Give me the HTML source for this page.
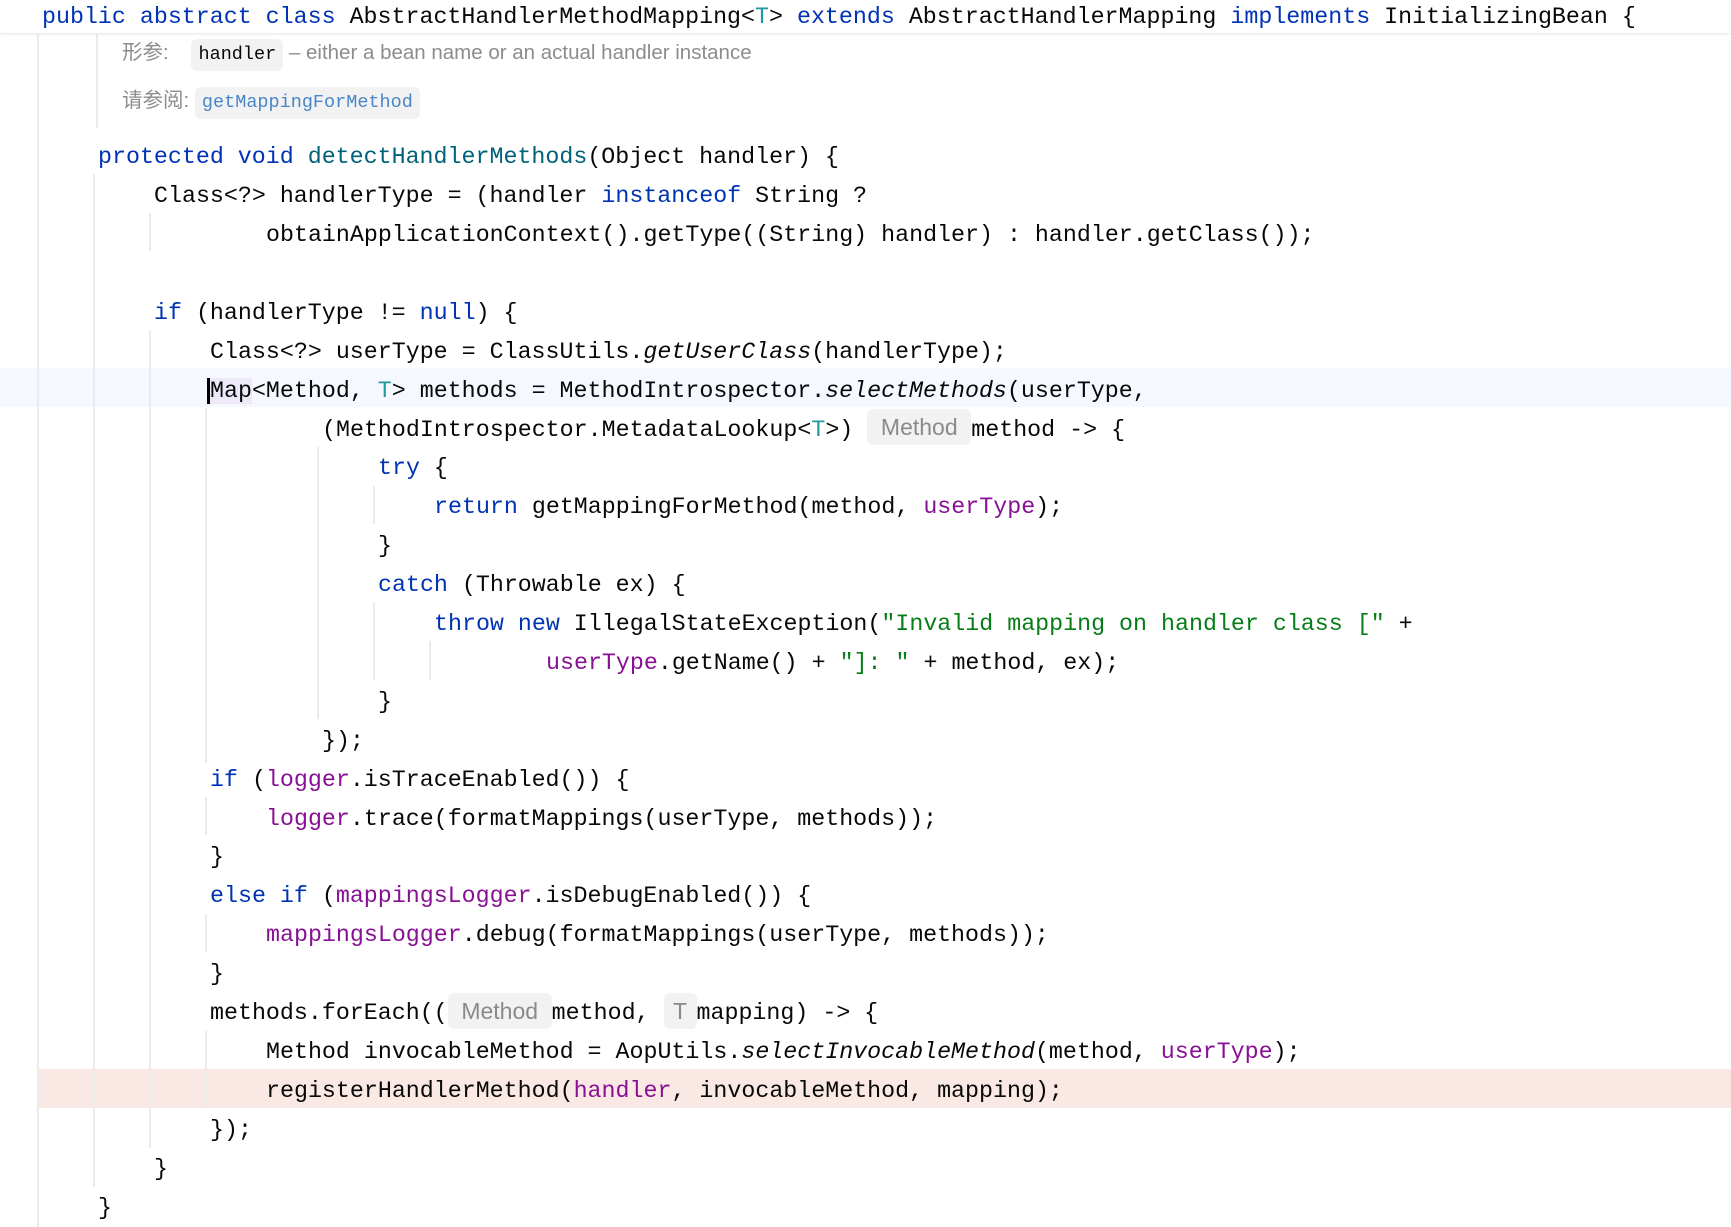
<!DOCTYPE html>
<html><head><meta charset="utf-8"><style>
*{margin:0;padding:0}
body{width:1731px;height:1227px;background:#fff;position:relative;overflow:hidden;font-family:"Liberation Mono",monospace;font-size:23.3px;color:#080808}
.l{position:absolute;left:0;height:38.9px;line-height:38.9px;white-space:pre;margin-top:3px}
.k{color:#0033b3}.f{color:#871094}.s{color:#067d17}.t{color:#20999d}.d{color:#00627a}.i{font-style:italic}
.g{position:absolute;width:2px;background:#ebebeb}
.inl{display:inline-block;font-family:"Liberation Sans",sans-serif;font-size:23px;color:#8a8a8a;background:#f2f2f2;border-radius:6px;text-align:center;line-height:36px;vertical-align:middle;margin-top:-4px}
.doc{position:absolute;font-family:"Liberation Sans","Noto Sans CJK SC",sans-serif;font-size:20.5px;color:#8c8c8c;white-space:pre}
.chip{display:inline-block;font-family:"Liberation Mono",monospace;font-size:18.5px;background:#f2f2f2;border-radius:6px;padding:0 7px;line-height:32px}
</style></head><body>
<div style="position:absolute;left:0;top:368px;width:1731px;height:39px;background:#f5f8fe"></div>
<div style="position:absolute;left:38px;top:1069px;width:1693px;height:39px;background:#f9e8e4"></div>
<div class="g" style="left:37px;top:33px;height:1194px;background:#ececec"></div>
<div class="g" style="left:96px;top:33px;height:95px"></div>
<div class="g" style="left:93px;top:174px;height:1013px"></div>
<div class="g" style="left:149px;top:213px;height:38px"></div>
<div class="g" style="left:149px;top:330px;height:818px"></div>
<div class="g" style="left:205px;top:408px;height:355px"></div>
<div class="g" style="left:205px;top:797px;height:38px"></div>
<div class="g" style="left:205px;top:914px;height:38px"></div>
<div class="g" style="left:205px;top:1031px;height:77px"></div>
<div class="g" style="left:317px;top:447px;height:272px"></div>
<div class="g" style="left:373px;top:486px;height:38px"></div>
<div class="g" style="left:373px;top:602px;height:78px"></div>
<div class="g" style="left:429px;top:641px;height:39px"></div>
<div style="position:absolute;left:0;top:0;width:1731px;height:33px;background:#fff;border-bottom:1px solid #ececec;box-shadow:0 1px 3px rgba(0,0,0,0.05)"></div>
<div class="l" style="left:42px;top:-5px"><span class="k">public abstract class</span> AbstractHandlerMethodMapping&lt;<span class="t">T</span>&gt; <span class="k">extends</span> AbstractHandlerMapping <span class="k">implements</span> InitializingBean {</div>
<div class="doc" style="left:122px;top:35px">形参:    <span class="chip" style="color:#080808">handler</span> – either a bean name or an actual handler instance</div>
<div class="doc" style="left:122px;top:83px">请参阅: <span class="chip" style="color:#4a86c7">getMappingForMethod</span></div>
<div class="l" style="left:98px;top:135.2px"><span class="k">protected void</span> <span class="d">detectHandlerMethods</span>(Object handler) {</div>
<div class="l" style="left:154px;top:174.1px">Class&lt;?&gt; handlerType = (handler <span class="k">instanceof</span> String ?</div>
<div class="l" style="left:266px;top:213px">obtainApplicationContext().getType((String) handler) : handler.getClass());</div>
<div class="l" style="left:154px;top:290.8px"><span class="k">if</span> (handlerType != <span class="k">null</span>) {</div>
<div class="l" style="left:210px;top:329.7px">Class&lt;?&gt; userType = ClassUtils.<span class="i">getUserClass</span>(handlerType);</div>
<div class="l" style="left:210px;top:368.6px"><span style="background:#ede9f8;border-left:3px solid #000;margin-left:-3px">Map</span>&lt;Method, <span class="t">T</span>&gt; methods = MethodIntrospector.<span class="i">selectMethods</span>(userType,</div>
<div class="l" style="left:322px;top:407.5px">(MethodIntrospector.MetadataLookup&lt;<span class="t">T</span>&gt;) <span class="inl" style="width:104px">Method</span>method -&gt; {</div>
<div class="l" style="left:378px;top:446.4px"><span class="k">try</span> {</div>
<div class="l" style="left:434px;top:485.3px"><span class="k">return</span> getMappingForMethod(method, <span class="f">userType</span>);</div>
<div class="l" style="left:378px;top:524.2px">}</div>
<div class="l" style="left:378px;top:563.1px"><span class="k">catch</span> (Throwable ex) {</div>
<div class="l" style="left:434px;top:602px"><span class="k">throw new</span> IllegalStateException(<span class="s">"Invalid mapping on handler class ["</span> +</div>
<div class="l" style="left:546px;top:640.9px"><span class="f">userType</span>.getName() + <span class="s">"]: "</span> + method, ex);</div>
<div class="l" style="left:378px;top:679.8px">}</div>
<div class="l" style="left:322px;top:718.7px">});</div>
<div class="l" style="left:210px;top:757.6px"><span class="k">if</span> (<span class="f">logger</span>.isTraceEnabled()) {</div>
<div class="l" style="left:266px;top:796.5px"><span class="f">logger</span>.trace(formatMappings(userType, methods));</div>
<div class="l" style="left:210px;top:835.4px">}</div>
<div class="l" style="left:210px;top:874.3px"><span class="k">else if</span> (<span class="f">mappingsLogger</span>.isDebugEnabled()) {</div>
<div class="l" style="left:266px;top:913.2px"><span class="f">mappingsLogger</span>.debug(formatMappings(userType, methods));</div>
<div class="l" style="left:210px;top:952.1px">}</div>
<div class="l" style="left:210px;top:991px">methods.forEach((<span class="inl" style="width:104px">Method</span>method, <span class="inl" style="width:33px">T</span>mapping) -&gt; {</div>
<div class="l" style="left:266px;top:1029.9px">Method invocableMethod = AopUtils.<span class="i">selectInvocableMethod</span>(method, <span class="f">userType</span>);</div>
<div class="l" style="left:266px;top:1068.8px">registerHandlerMethod(<span class="f">handler</span>, invocableMethod, mapping);</div>
<div class="l" style="left:210px;top:1107.7px">});</div>
<div class="l" style="left:154px;top:1146.6px">}</div>
<div class="l" style="left:98px;top:1185.5px">}</div>
</body></html>
